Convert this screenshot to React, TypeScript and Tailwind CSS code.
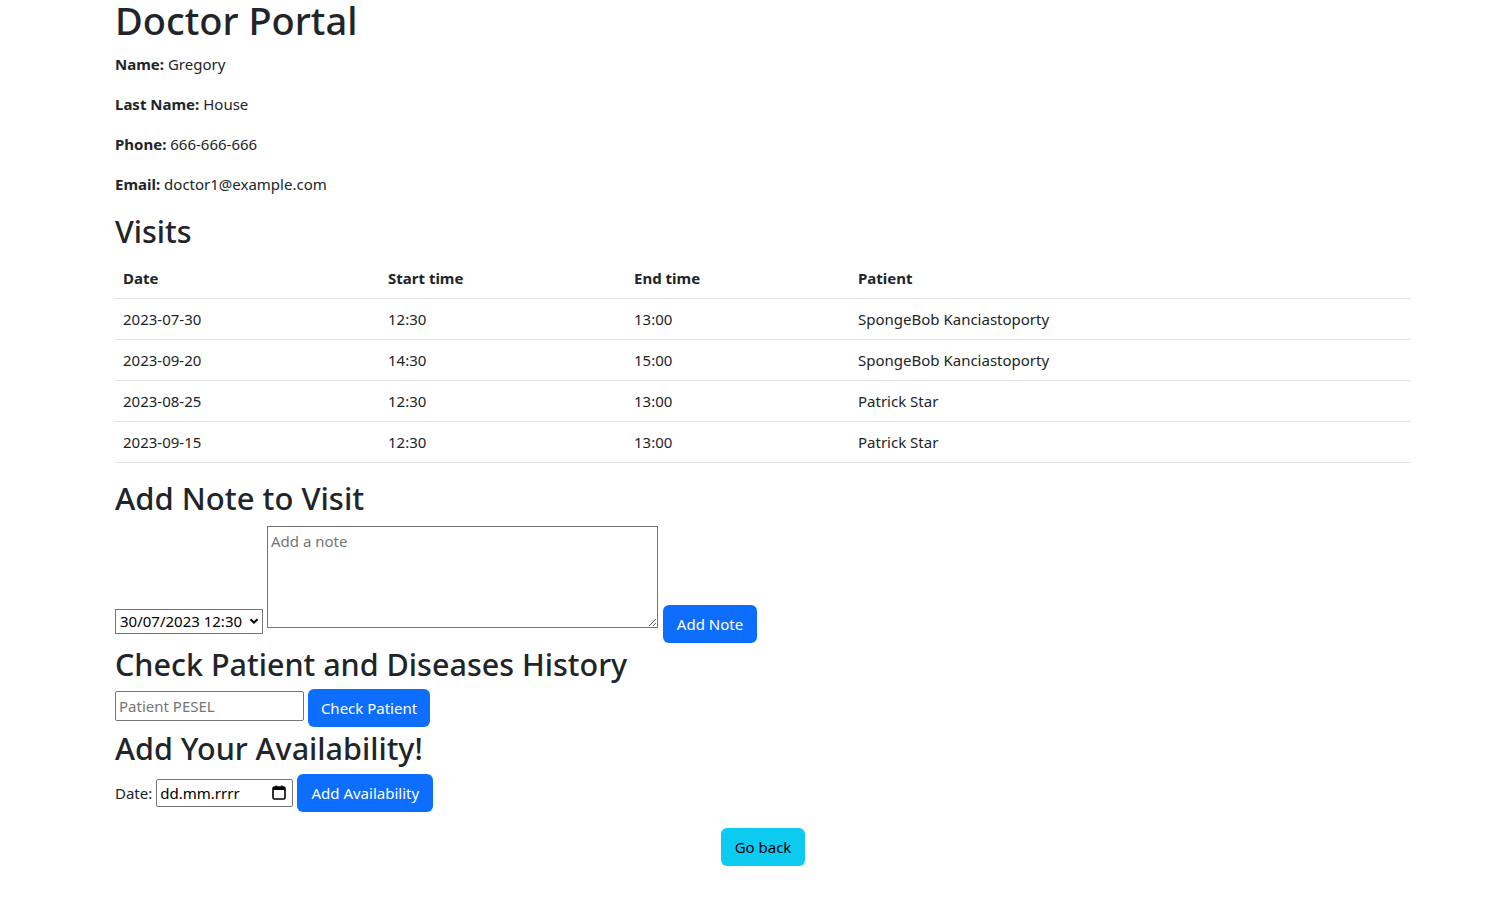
import React from "react";

const rows = [
  ["2023-07-30", "12:30", "13:00", "SpongeBob Kanciastoporty"],
  ["2023-09-20", "14:30", "15:00", "SpongeBob Kanciastoporty"],
  ["2023-08-25", "12:30", "13:00", "Patrick Star"],
  ["2023-09-15", "12:30", "13:00", "Patrick Star"],
];

export default function App() {
  return (
    <div className="min-h-[909px] overflow-hidden bg-white font-['Noto_Sans',sans-serif] text-[15px] leading-6 text-[#212529]">
      <div className="ml-[115px] w-[1296px]">
        <h1 className="mb-3 text-[38px] font-medium leading-[40px]">Doctor Portal</h1>
        <p className="mb-4"><b className="font-bold">Name:</b> Gregory</p>
        <p className="mb-4"><b className="font-bold">Last Name:</b> House</p>
        <p className="mb-4"><b className="font-bold">Phone:</b> 666-666-666</p>
        <p className="mb-4"><b className="font-bold">Email:</b> doctor1@example.com</p>

        <h2 className="mb-2 text-[30.5px] font-medium leading-[38.4px]">Visits</h2>
        <table className="mb-4 w-full border-collapse text-left">
          <thead>
            <tr className="border-b border-[#dee2e6]">
              <th className="w-[265px] px-2 py-2 font-bold">Date</th>
              <th className="w-[246px] px-2 py-2 font-bold">Start time</th>
              <th className="w-[224px] px-2 py-2 font-bold">End time</th>
              <th className="px-2 py-2 font-bold">Patient</th>
            </tr>
          </thead>
          <tbody>
            {rows.map((r, i) => (
              <tr key={i} className="border-b border-[#dee2e6]">
                {r.map((c, j) => (
                  <td key={j} className="px-2 py-2">{c}</td>
                ))}
              </tr>
            ))}
          </tbody>
        </table>

        <h2 className="mb-2 text-[31px] font-medium leading-[38.4px]">Add Note to Visit</h2>
        <div className="flex items-end pb-[2px]">
          <div className="mb-[9px] flex h-[25px] w-[148px] items-center justify-between whitespace-nowrap border border-[#767676] bg-white pl-[4px] pr-[3px] text-[15px] leading-none text-black">
            <span>30/07/2023 12:30</span>
            <svg width="10" height="10" viewBox="0 0 10 10">
              <path d="M1.5 3.2 L5 6.7 L8.5 3.2" fill="none" stroke="#000" strokeWidth="2" />
            </svg>
          </div>
          <textarea
            placeholder="Add a note"
            className="mb-[15px] ml-[4px] h-[102px] w-[391px] resize-y border border-[#767676] px-[3px] py-[2px] text-[15px] leading-6 placeholder:text-[#757575]"
          />
          <button className="ml-[5px] h-[38px] w-[94px] rounded-[6px] bg-[#0d6efd] text-white">Add Note</button>
        </div>

        <h2 className="mb-[6px] text-[30.5px] font-medium leading-[38.4px]">Check Patient and Diseases History</h2>
        <div className="flex items-start">
          <input
            placeholder="Patient PESEL"
            className="mt-[2px] h-[30px] w-[189px] rounded-[2px] border border-[#767676] px-[3px] text-[15px] placeholder:text-[#757575]"
          />
          <button className="ml-[4px] h-[38px] w-[122px] rounded-[6px] bg-[#0d6efd] text-white">Check Patient</button>
        </div>

        <h2 className="mb-[6px] mt-[2px] text-[30.5px] font-medium leading-[38.4px]">Add Your Availability!</h2>
        <div className="flex items-center">
          <span>Date:</span>
          <div className="ml-[4px] flex h-[28px] w-[137px] items-center justify-between rounded-[2px] border border-[#767676] pl-[3px] pr-[6px] text-black">
            <span>dd.mm.rrrr</span>
            <svg width="14" height="15" viewBox="0 0 14 15">
              <rect x="1" y="2" width="12" height="12" rx="1.5" fill="none" stroke="#000" strokeWidth="1.6" />
              <rect x="1" y="2" width="12" height="3" fill="#000" />
              <rect x="3.5" y="0.5" width="1.6" height="3" fill="#000" />
              <rect x="8.9" y="0.5" width="1.6" height="3" fill="#000" />
            </svg>
          </div>
          <button className="ml-[4px] h-[38px] w-[136px] rounded-[6px] bg-[#0d6efd] text-white">Add Availability</button>
        </div>

        <div className="mt-4 flex justify-center">
          <button className="h-[38px] w-[84px] rounded-[6px] bg-[#0dcaf0] text-black">Go back</button>
        </div>
      </div>
    </div>
  );
}
